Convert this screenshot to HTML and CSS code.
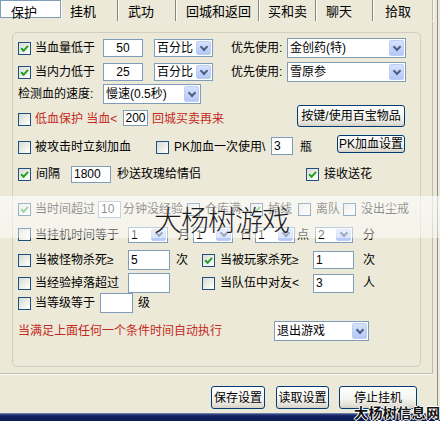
FILE: index.html
```html
<!DOCTYPE html>
<html lang="zh">
<head>
<meta charset="utf-8">
<title>保护</title>
<link rel="stylesheet" href="styles.css">
</head>
<body>
<div class="win">
  <div class="tabs">
    <div class="tab t1 sel">保护</div>
    <div class="tab t2">挂机</div>
    <div class="tab t3">武功</div>
    <div class="tab t4">回城和返回</div>
    <div class="tab t5">买和卖</div>
    <div class="tab t6">聊天</div>
    <div class="tab t7">拾取</div>
  </div>
  <div class="panel">
    <div class="group">
      <div class="row r1">
        <span class="cbl w85"><span class="chk"><svg viewBox="0 0 11 11" width="11" height="11"><path d="M2.2 5.2 L4.6 7.8 L9 2.8" fill="none" stroke="#21a121" stroke-width="2"/></svg></span>当血量低于</span>
        <span class="inp ctr w40">50</span>
        <span class="sel w59 ml11"><span class="v">百分比</span><span class="arr"></span></span>
        <span class="lab w56 ml18">优先使用:</span>
        <span class="sel w119 tall"><span class="v">金创药(特)</span><span class="arr"></span></span>
      </div>
      <div class="row r2">
        <span class="cbl w85"><span class="chk"><svg viewBox="0 0 11 11" width="11" height="11"><path d="M2.2 5.2 L4.6 7.8 L9 2.8" fill="none" stroke="#21a121" stroke-width="2"/></svg></span>当内力低于</span>
        <span class="inp ctr w40">25</span>
        <span class="sel w59 ml11"><span class="v">百分比</span><span class="arr"></span></span>
        <span class="lab w56 ml18">优先使用:</span>
        <span class="sel w119 tall"><span class="v">雪原参</span><span class="arr"></span></span>
      </div>
      <div class="row r3">
        <span class="lab w85">检测血的速度:</span>
        <span class="sel w98 tall"><span class="v">慢速(0.5秒)</span><span class="arr"></span></span>
      </div>
      <div class="row r4">
        <span class="cbl red w105"><span class="chk"></span>低血保护 当血&lt;</span>
        <span class="inp ctr short w25">200</span>
        <span class="red ml4">回城买卖再来</span>
        <span class="btn btn-item">按键/使用百宝物品</span>
      </div>
      <div class="row r5">
        <span class="cbl w138"><span class="chk"></span>被攻击时立刻加血</span>
        <span class="cbl w115 gap5"><span class="chk"></span>PK加血一次使用\</span>
        <span class="inp w22">3</span>
        <span class="lab ml7">瓶</span>
        <span class="btn btn-pk">PK加血设置</span>
      </div>
      <div class="row r6">
        <span class="cbl w53 gap5"><span class="chk"><svg viewBox="0 0 11 11" width="11" height="11"><path d="M2.2 5.2 L4.6 7.8 L9 2.8" fill="none" stroke="#21a121" stroke-width="2"/></svg></span>间隔</span>
        <span class="inp w40 h17">1800</span>
        <span class="lab w195 pl6">秒送玫瑰给情侣</span>
        <span class="cbl gap5"><span class="chk"><svg viewBox="0 0 11 11" width="11" height="11"><path d="M2.2 5.2 L4.6 7.8 L9 2.8" fill="none" stroke="#21a121" stroke-width="2"/></svg></span>接收送花</span>
      </div>
      <div class="row r7">
        <span class="cbl w80"><span class="chk"><svg viewBox="0 0 11 11" width="11" height="11"><path d="M2.2 5.2 L4.6 7.8 L9 2.8" fill="none" stroke="#21a121" stroke-width="2"/></svg></span>当时间超过</span>
        <span class="inp w23 h17">10</span>
        <span class="lab w66 pl2">分钟没经验</span>
        <span class="cbl w63 gap5"><span class="chk"></span>仓库满</span>
        <span class="cbl w48 gap5"><span class="chk"><svg viewBox="0 0 11 11" width="11" height="11"><path d="M2.2 5.2 L4.6 7.8 L9 2.8" fill="none" stroke="#21a121" stroke-width="2"/></svg></span>掉线</span>
        <span class="cbl w45 gap5"><span class="chk"></span>离队</span>
        <span class="cbl gap5"><span class="chk"></span>没出尘戒</span>
      </div>
      <div class="row r8">
        <span class="cbl w110"><span class="chk"></span>当挂机时间等于</span>
        <span class="sel w40 low"><span class="v">1</span><span class="arr"></span></span>
        <span class="lab w25 pl10">月</span>
        <span class="sel w40 low"><span class="v">1</span><span class="arr"></span></span>
        <span class="lab w22 pl7">日</span>
        <span class="sel w40 low"><span class="v">1</span><span class="arr"></span></span>
        <span class="lab w20 pl2">点</span>
        <span class="sel w38 low"><span class="v">2</span><span class="arr"></span></span>
        <span class="lab pl10">分</span>
      </div>
      <div class="row r9">
        <span class="cbl w110"><span class="chk"></span>当被怪物杀死≥</span>
        <span class="inp w42 h20">5</span>
        <span class="lab w32 pl6">次</span>
        <span class="cbl w111 gap5"><span class="chk"><svg viewBox="0 0 11 11" width="11" height="11"><path d="M2.2 5.2 L4.6 7.8 L9 2.8" fill="none" stroke="#21a121" stroke-width="2"/></svg></span>当被玩家杀死≥</span>
        <span class="inp w41">1</span>
        <span class="lab pl9">次</span>
      </div>
      <div class="row r10">
        <span class="cbl w110"><span class="chk"></span>当经验掉落超过</span>
        <span class="inp w42 h20"></span>
        <span class="lab w32"></span>
        <span class="cbl w111 gap5"><span class="chk"></span>当队伍中对友&lt;</span>
        <span class="inp w41 h19">3</span>
        <span class="lab pl9">人</span>
      </div>
      <div class="row r11">
        <span class="cbl w82"><span class="chk"></span>当等级等于</span>
        <span class="inp w33 h20"></span>
        <span class="lab pl5">级</span>
      </div>
      <div class="row r12">
        <span class="red w256">当满足上面任何一个条件时间自动执行</span>
        <span class="sel w95 tall"><span class="v">退出游戏</span><span class="arr"></span></span>
      </div>
    </div>
  </div>
  <div class="btns">
    <span class="btn btn-save">保存设置</span>
    <span class="btn btn-load">读取设置</span>
    <span class="btn btn-stop">停止挂机</span>
  </div>
</div>
<div class="taskbar"></div>
<div class="band"></div>
<div class="wm-big">大杨树游戏</div>
<div class="wm-small">大杨树信息网</div>
</body>
</html>
```
FILE: styles.css
```css
* { box-sizing: border-box; }
html, body { margin: 0; padding: 0; }
body {
  width: 440px;
  height: 421px;
  overflow: hidden;
  position: relative;
  background: #ece9d8;
  font-family: "Liberation Sans", "Noto Sans CJK SC", sans-serif;
  font-size: 12px;
  line-height: 16px;
  color: #000;
}
.win {
  width: 438px;
  height: 413px;
  border-right: 1px solid #8e8d86;
}
/* tabs */
.tabs { display: flex; height: 22px; }
.tab {
  height: 21px;
  padding-left: 10px;
  padding-top: 4px;
  font-size: 13px;
  line-height: 15px;
  border-right: 1px solid #85857f;
  box-shadow: 1px 0 0 #fbfbf8;
  flex: none;
}
.t1 { width: 61px; }
.t2 { width: 57px; padding-left: 9px; }
.t3 { width: 58px; }
.t4 { width: 83px; }
.t5 { width: 57px; padding-left: 9px; }
.t6 { width: 57px; }
.t7 { width: 60px; padding-left: 12px; border-right-color: #b9b8b0; }
.panel {
  width: 433px;
  height: 352px;
  border-right: 1px solid #bdbcb3;
  border-bottom: 1px solid #bdbcb3;
  box-shadow: 0 1px 0 #fbfbf8;
  padding: 10px 0 0 12px;
}
.group {
  width: 409px;
  height: 335px;
  border: 1px solid #d0cfbf;
  border-radius: 5px;
  padding: 5px 14px 0 5px;
}
/* rows */
.row { display: flex; align-items: center; white-space: nowrap; }
.r1 { height: 20px; }
.r2 { height: 20px; margin-top: 4px; }
.r3 { height: 20px; margin-top: 2px; }
.r4 { height: 23px; margin-top: 1px; align-items: flex-end; padding-bottom: 1px; }
.r5 { height: 21px; margin-top: 7px; align-items: flex-end; padding-bottom: 1px; }
.r6 { height: 18px; margin-top: 9px; }
.r7 { height: 18px; margin-top: 17px; }
.r8 { height: 17px; margin-top: 8px; }
.r9 { height: 20px; margin-top: 7px; }
.r10 { height: 20px; margin-top: 3px; }
.r11 { height: 20px; }
.r12 { height: 22px; margin-top: 7px; }

.cbl { display: flex; align-items: center; gap: 4px; flex: none; }
.gap5 { gap: 5px; }
.r4 .cbl, .r5 .cbl { align-items: flex-end; }
.r4 .cbl .chk, .r5 .cbl .chk { margin-bottom: 1px; }
.lab { flex: none; }
.red { color: #c42a22; flex: none; }

.chk {
  width: 13px;
  height: 13px;
  flex: none;
  border: 1px solid #1c5180;
  background: linear-gradient(135deg, #d9d9d2 0%, #f1f1ec 60%, #ffffff 100%);
  display: flex;
  align-items: center;
  justify-content: center;
}
.chk svg { display: block; }

.inp {
  height: 18px;
  border: 1px solid #7f9db9;
  background: #fff;
  padding: 0 2px;
  display: flex;
  align-items: center;
  flex: none;
}
.inp.ctr { justify-content: center; }
.inp.short { height: 16px; margin-bottom: 1px; }
.h17 { height: 17px; }
.h19 { height: 19px; }
.h20 { height: 20px; }

.sel {
  height: 18px;
  border: 1px solid #7f9db9;
  background: #fff;
  display: flex;
  flex: none;
}
.sel.tall { height: 20px; }
.sel.low { height: 16px; }
.sel .v { flex: 1; padding-left: 2px; display: flex; align-items: center; }
.sel .arr {
  width: 15px;
  margin: 1px;
  border-radius: 2px;
  background: linear-gradient(#d6e2fd, #b4c8f6);
  border: 1px solid #bccdf7;
  display: flex;
  align-items: center;
  justify-content: center;
}
.sel .arr::before {
  content: "";
  width: 4px;
  height: 4px;
  border-right: 2px solid #4d6185;
  border-bottom: 2px solid #4d6185;
  transform: rotate(45deg);
  margin-top: -3px;
}

/* widths & spacing */
.w20 { width: 20px; } .w22 { width: 22px; } .w23 { width: 23px; } .w25 { width: 25px; }
.w32 { width: 32px; } .w33 { width: 33px; } .w38 { width: 38px; } .w40 { width: 40px; }
.w41 { width: 41px; } .w42 { width: 42px; } .w45 { width: 45px; } .w48 { width: 48px; }
.w53 { width: 53px; } .w56 { width: 56px; } .w59 { width: 59px; } .w63 { width: 63px; }
.w66 { width: 66px; } .w80 { width: 80px; } .w82 { width: 82px; } .w85 { width: 85px; }
.w95 { width: 95px; } .w98 { width: 98px; } .w105 { width: 105px; } .w110 { width: 110px; }
.w111 { width: 111px; } .w115 { width: 115px; } .w119 { width: 119px; } .w138 { width: 138px; }
.w195 { width: 195px; } .w256 { width: 256px; }
.ml4 { margin-left: 4px; } .ml7 { margin-left: 7px; } .ml11 { margin-left: 11px; } .ml18 { margin-left: 18px; }
.pl2 { padding-left: 2px; } .pl5 { padding-left: 5px; } .pl6 { padding-left: 6px; } .pl7 { padding-left: 7px; }
.pl9 { padding-left: 9px; } .pl10 { padding-left: 10px; }

/* buttons */
.btn {
  flex: none;
  display: flex;
  align-items: center;
  justify-content: center;
  border: 1px solid #003c74;
  border-radius: 3px;
  background: linear-gradient(#ffffff 0%, #f4f4f0 55%, #e3e1d8 85%, #d6d0c5 100%);
  white-space: nowrap;
}
.btn-item { width: 108px; height: 22px; margin-left: auto; margin-right: 1px; }
.btn-pk { width: 68px; height: 18px; margin-left: auto; margin-right: 1px; align-self: flex-start; }
.btns { display: flex; gap: 10px; margin-top: 12px; padding-left: 211px; }
.btn-save { width: 54px; height: 23px; margin-right: 1px; }
.btn-load { width: 53px; height: 23px; }
.btn-stop { width: 78px; height: 23px; }

.taskbar {
  height: 8px;
  width: 440px;
  background: linear-gradient(#9aa8c8 0, #3b5188 1px, #0f2160 3px, #0a1a52 100%);
}

/* overlays */
.band {
  position: absolute;
  left: 0;
  top: 196px;
  width: 440px;
  height: 42px;
  background: linear-gradient(rgba(255,255,255,0.62), rgba(255,255,255,0.45));
}
.wm-big {
  position: absolute;
  left: 154px;
  top: 205px;
  font-family: "Noto Sans CJK SC", sans-serif;
  font-size: 28px;
  line-height: 28px;
  letter-spacing: -1px;
  color: #1e1e1e;
  font-weight: 300;
  white-space: nowrap;
  text-shadow: 0 0 1px #fff;
}
.wm-small {
  position: absolute;
  left: 354px;
  top: 402px;
  font-family: "Noto Sans CJK SC", sans-serif;
  font-size: 14px;
  line-height: 20px;
  letter-spacing: 0.4px;
  font-weight: 700;
  white-space: nowrap;
  color: #111;
  text-shadow: 1px 0 0 #fff, -1px 0 0 #fff, 0 1px 0 #fff, 0 -1px 0 #fff;
}
```
